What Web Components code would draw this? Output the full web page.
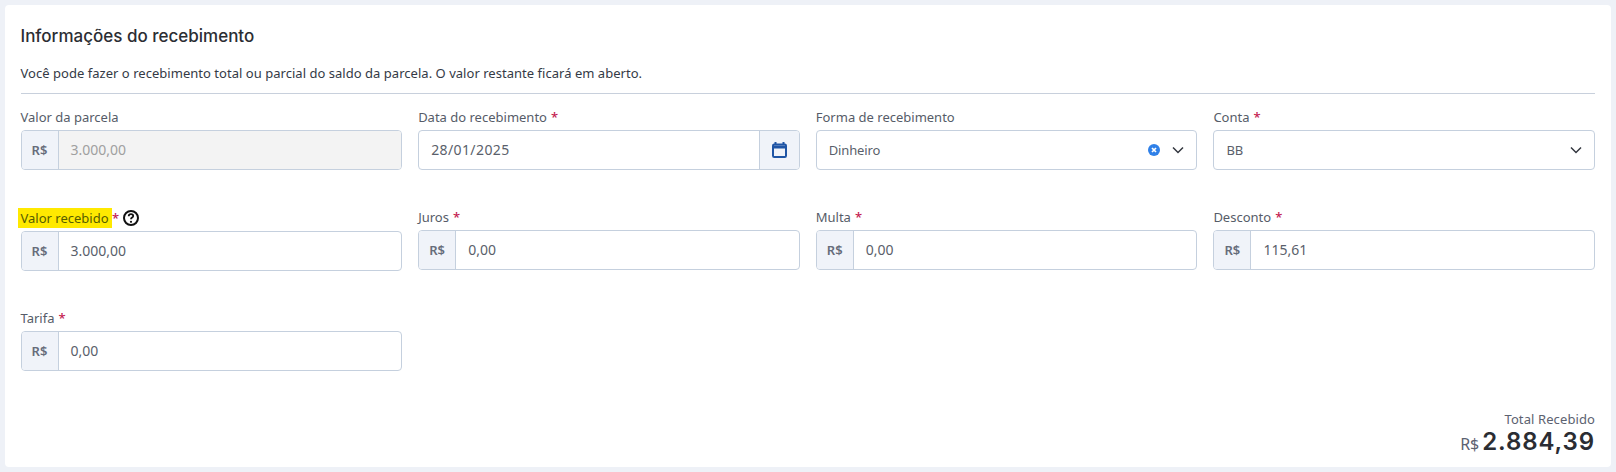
<!DOCTYPE html>
<html lang="pt-BR">
<head>
<meta charset="utf-8">
<title>Informações do recebimento</title>
<style>
  html, body { margin: 0; height: 100%; }
  body {
    background: #eef1f7;
    padding: 5px;
    box-sizing: border-box;
    font-family: "Noto Sans", "Open Sans", sans-serif;
    color: #3a3f4b;
  }
</style>
</head>
<body>
<receipt-card>
  <span slot="title">Informações do recebimento</span>
  <span slot="hint">Você pode fazer o recebimento total ou parcial do saldo da parcela. O valor restante ficará em aberto.</span>

  <form-field label="Valor da parcela" addon="R$" value="3.000,00" disabled></form-field>
  <form-field label="Data do recebimento" required value="28/01/2025" kind="date"></form-field>
  <form-field label="Forma de recebimento" value="Dinheiro" kind="select" clearable></form-field>
  <form-field label="Conta" required value="BB" kind="select"></form-field>

  <form-field label="Valor recebido" required addon="R$" value="3.000,00" marked help></form-field>
  <form-field label="Juros" required addon="R$" value="0,00"></form-field>
  <form-field label="Multa" required addon="R$" value="0,00"></form-field>
  <form-field label="Desconto" required addon="R$" value="115,61"></form-field>

  <form-field label="Tarifa" required addon="R$" value="0,00"></form-field>

  <span slot="total-label">Total Recebido</span>
  <span slot="total-value">2.884,39</span>
</receipt-card>

<script>
class ReceiptCard extends HTMLElement {
  connectedCallback() {
    this.attachShadow({ mode: 'open' });
    this.shadowRoot.innerHTML = `
      <style>
        :host {
          display: block;
          height: 462px;
          box-sizing: border-box;
          background: #fff;
          border-radius: 4px;
          padding: 16px 16px 0 15.5px;
        }
        h2 {
          margin: 0;
          font-family: Inter, "Noto Sans", sans-serif;
          font-size: 17px;
          line-height: 30px;
          font-weight: 500;
          color: #2b2d33;
        }
        p {
          margin: 12px 0 0;
          font-size: 13px;
          line-height: 20px;
          letter-spacing: 0.03px;
          color: #343a46;
        }
        hr {
          border: 0;
          border-top: 1px solid #c8d0dc;
          margin: 10px 0 0;
        }
        .grid {
          display: grid;
          grid-template-columns: repeat(4, 1fr);
          column-gap: 16px;
          row-gap: 38px;
          margin-top: 14px;
          align-items: start;
        }
        .total {
          display: flex;
          flex-direction: column;
          align-items: flex-end;
          margin-top: 40px;
        }
        .total-label { font-size: 13px; line-height: 16px; letter-spacing: 0.1px; color: #5c6270; }
        .total-row { display: flex; align-items: baseline; gap: 3px; line-height: 26px; margin-top: 2px; }
        .cur { font-size: 16px; color: #5c6270; }
        .val { font-family: Inter, "Noto Sans", sans-serif; font-size: 24px; font-weight: 600; letter-spacing: 0.9px; color: #2b2d33; }
      </style>
      <h2><slot name="title"></slot></h2>
      <p><slot name="hint"></slot></p>
      <hr>
      <div class="grid"><slot></slot></div>
      <div class="total">
        <div class="total-label"><slot name="total-label"></slot></div>
        <div class="total-row"><span class="cur">R$</span><span class="val"><slot name="total-value"></slot></span></div>
      </div>`;
  }
}

const CHEVRON = `<svg class="chev" width="12" height="8" viewBox="0 0 12 8" fill="none"><path d="M1 1.5 6 6.5 11 1.5" stroke="#33373f" stroke-width="1.5"/></svg>`;
const CLEAR = `<svg class="clear" width="12" height="12" viewBox="0 0 12 12"><circle cx="6" cy="6" r="6" fill="#2f80e8"/><path d="M4 4 8 8M8 4 4 8" stroke="#fff" stroke-width="1.7"/></svg>`;
const CALENDAR = `<svg width="15" height="16" viewBox="0 0 15 16" fill="none"><path d="M3.5 0v3M11.5 0v3" stroke="#1f55a5" stroke-width="2"/><rect x="1" y="2.5" width="13" height="12.5" rx="1.2" stroke="#1f55a5" stroke-width="2"/><path d="M1 5h13" stroke="#1f55a5" stroke-width="3"/></svg>`;
const HELP = `<svg class="help" width="16" height="16" viewBox="0 0 16 16" fill="none"><circle cx="8" cy="8" r="7" stroke="#111" stroke-width="2"/><path d="M5.7 6.2c0-1.3 1-2.1 2.3-2.1s2.2.8 2.2 1.9c0 1.6-2.2 1.6-2.2 3.2" stroke="#111" stroke-width="1.8"/><circle cx="8" cy="11.8" r="1.1" fill="#111"/></svg>`;

class FormField extends HTMLElement {
  connectedCallback() {
    const label = this.getAttribute('label');
    const value = this.getAttribute('value');
    const addon = this.getAttribute('addon');
    const kind = this.getAttribute('kind');
    const required = this.hasAttribute('required') ? '<span class="req">*</span>' : '';
    const labelText = this.hasAttribute('marked') ? `<mark>${label} </mark>` : `<span>${label}</span> `;

    this.attachShadow({ mode: 'open' });
    this.shadowRoot.innerHTML = `
      <style>
        :host { display: block; font-size: 13px; }
        .label {
          display: flex;
          align-items: center;
          white-space: pre;
          height: 22px;
          padding-bottom: 5px;
          box-sizing: border-box;
          color: #565c68;
        }
        :host([help]) .label { height: 23px; padding-bottom: 3px; }
        .label span:first-child { margin-right: 4px; }
        mark {
          background: #ffe900;
          color: #565c00;
          margin-left: -3px;
          padding: 0 0 0 3px;
          line-height: 20px;
        }
        .req { color: #c3204f; font-weight: 500; }
        .help { margin-left: 4px; }
        .control {
          display: flex;
          align-items: stretch;
          height: 40px;
          box-sizing: border-box;
          border: 1px solid #c5d0de;
          border-radius: 4px;
          overflow: hidden;
          background: #fff;
        }
        .addon {
          flex: none;
          display: flex;
          align-items: center;
          justify-content: center;
          width: 37px;
          padding-bottom: 1px;
          box-sizing: border-box;
          background: #f0f3f9;
          border-right: 1px solid #c5d0de;
          font-weight: 600;
          color: #666c7a;
        }
        .value {
          flex: 1;
          display: flex;
          align-items: center;
          padding: 0 12px 2px;
          font-size: 14px;
          color: #5a5f6b;
        }
        :host([kind="date"]) .value { letter-spacing: 0.4px; }
        :host([kind="select"]) .value { font-size: 13px; letter-spacing: -0.15px; padding-bottom: 0; }
        :host([disabled]) .value { background: #f3f3f3; color: #a0a0a0; }
        .side {
          flex: none;
          display: flex;
          align-items: center;
          justify-content: center;
          width: 39px;
          background: #f0f3f9;
          border-left: 1px solid #c5d0de;
        }
        .icons { display: flex; align-items: center; gap: 12px; padding-right: 12px; }
      </style>
      <div class="label">${labelText}${required}${this.hasAttribute('help') ? HELP : ''}</div>
      <div class="control">
        ${addon ? `<div class="addon">${addon}</div>` : ''}
        <div class="value">${value}</div>
        ${kind === 'date' ? `<div class="side">${CALENDAR}</div>` : ''}
        ${kind === 'select' ? `<div class="icons">${this.hasAttribute('clearable') ? CLEAR : ''}${CHEVRON}</div>` : ''}
      </div>`;
  }
}

customElements.define('receipt-card', ReceiptCard);
customElements.define('form-field', FormField);
</script>
</body>
</html>
